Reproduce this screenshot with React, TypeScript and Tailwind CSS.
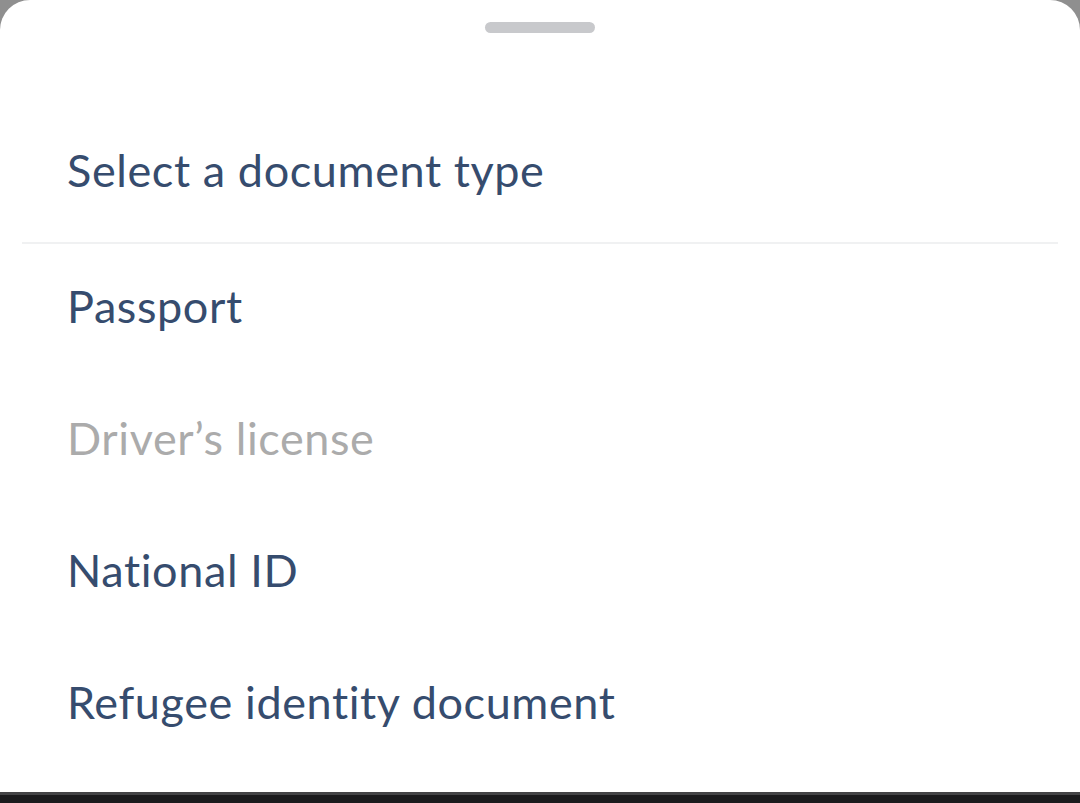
import React from 'react';

const items = [
    { label: 'Passport', disabled: false },
    { label: "Driver’s license", disabled: true },
    { label: 'National ID', disabled: false },
    { label: 'Refugee identity document', disabled: false },
];

export default function App() {
    return (
        <div className="h-[803px] w-[1080px] bg-[#8f8f8f] flex flex-col overflow-hidden" style={{ fontFamily: 'Lato, "Open Sans", sans-serif' }}>
            {/* Bottom sheet */}
            <div className="flex-1 bg-white rounded-t-[30px] flex flex-col">
                {/* Drag handle */}
                <div className="flex justify-center pt-[22px]">
                    <div className="w-[110px] h-[11px] rounded-full bg-[#c8c9cc]"></div>
                </div>

                {/* Header */}
                <div className="h-[209px] flex items-end pb-[49px] px-[67px]">
                    <h1 className="text-[45px] leading-none text-[#364c6e] tracking-[0.6px]">Select a document type</h1>
                </div>
                <div className="mx-[22px] h-[2px] bg-[#f0f1f2]"></div>

                {/* Options */}
                <ul className="flex flex-col">
                    {items.map((item) => (
                        <li
                            key={item.label}
                            className={`h-[132px] flex items-center px-[67px] pb-[8px] text-[45px] leading-none tracking-[0.6px] ${item.disabled ? 'text-[#ababab]' : 'text-[#364c6e]'}`}
                        >
                            {item.label}
                        </li>
                    ))}
                </ul>
            </div>

            {/* System nav bar edge */}
            <div className="h-[3px] bg-[#444446]"></div>
            <div className="h-[8px] bg-[#1b1b1d]"></div>
        </div>
    );
}
